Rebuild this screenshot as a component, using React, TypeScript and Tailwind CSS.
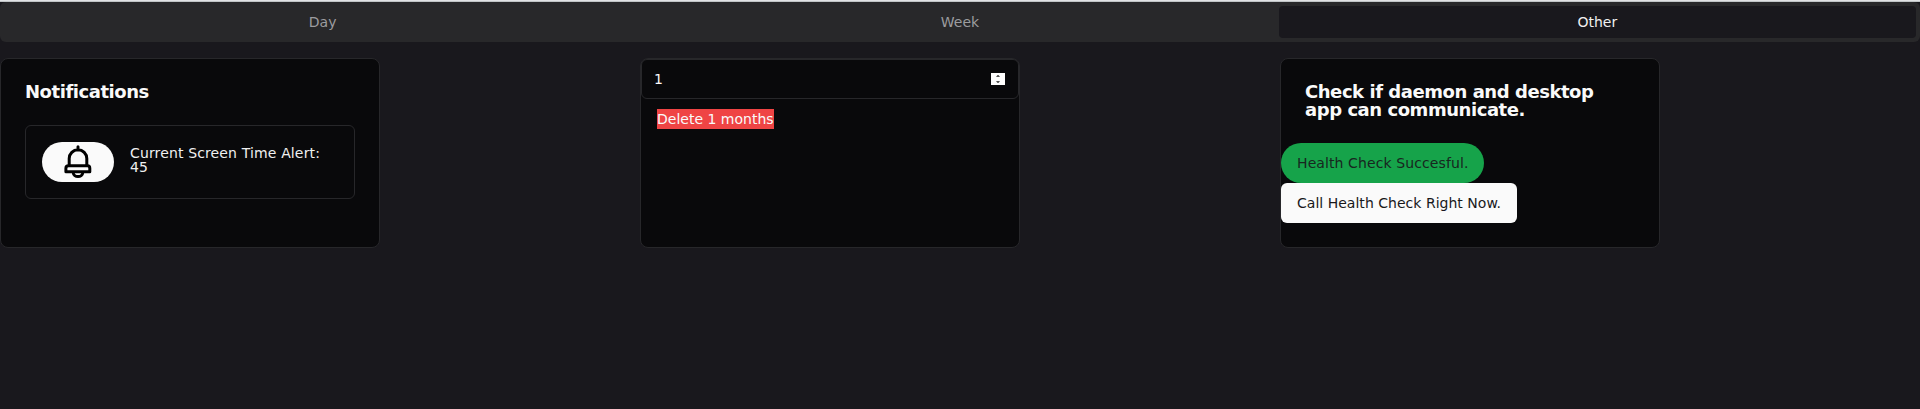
import { useState } from "react";
import type { ReactNode } from "react";

const tabs = ["Day", "Week", "Other"];

function Card({ children }: { children: ReactNode }) {
  return (
    <section className="h-[190px] w-[380px] rounded-lg border border-[#27272a] bg-[#09090b] text-[#fafafa]">
      {children}
    </section>
  );
}

function CardTitle({ children }: { children: ReactNode }) {
  return (
    <header className="p-6">
      <h3 className="text-lg leading-none font-bold tracking-tight">{children}</h3>
    </header>
  );
}

function Bell() {
  return (
    <svg width="40" height="40" viewBox="0 0 40 40" fill="none" stroke="#000" strokeWidth="3" strokeLinecap="round" strokeLinejoin="round">
      <path d="M20 4.800V8M11.200 23V16.600a8.800 8.800 0 0 1 17.600 0V23" />
      <path d="M10.500 23.800h19q2.300 0 2.300 2.500v3.500H7.900v-3.500q0-2.500 2.600-2.500z" />
      <path d="M15.200 30.500c.3 5.400 9.300 5.400 9.600 0" />
    </svg>
  );
}

export default function App() {
  const [active, setActive] = useState("Other");
  const [months, setMonths] = useState("1");

  return (
    <main className="min-h-screen border-t border-[#e1e3e5] bg-[#19181d] font-['DejaVu_Sans',sans-serif] text-sm text-[#fafafa]">
      <div className="h-px bg-[#c0c4c6]" />
      <nav className="flex h-10 rounded-md bg-[#28282a] p-1">
        {tabs.map((tab) => (
          <button
            key={tab}
            onClick={() => setActive(tab)}
            className={`flex-1 rounded-sm ${tab === active ? "bg-[#19181d] text-[#f0f0f0]" : "text-[#9c9c9f]"}`}
          >
            {tab}
          </button>
        ))}
      </nav>
      <div className="mt-4 grid grid-cols-3">
        <Card>
          <CardTitle>Notifications</CardTitle>
          <div className="mx-6 flex items-center gap-4 rounded-md border border-[#27272a] p-4">
            <div className="flex h-10 w-[72px] shrink-0 items-center justify-center rounded-full bg-[#fafafa]">
              <Bell />
            </div>
            <p className="mb-1 leading-none tracking-[0.14px] text-[#f0f0f0]">Current Screen Time Alert: 45</p>
          </div>
        </Card>
        <Card>
          <div className="flex h-10 items-center justify-between rounded-md border border-[#27272a] pr-[13px] pl-3">
            <input
              value={months}
              onChange={(event) => setMonths(event.target.value)}
              className="w-40 bg-transparent outline-none"
            />
            <svg width="14" height="12" viewBox="0 0 14 12">
              <path fill="#fff" d="M0 0h14v12H0z" />
              <path fill="#555" d="M5 4h4L7.500 2h-1zM5 8h4l-1.500 2h-1z" />
            </svg>
          </div>
          <button className="flex h-10 items-center px-4">
            <span className="bg-[#ef4444]">Delete {months} months</span>
          </button>
        </Card>
        <Card>
          <CardTitle>Check if daemon and desktop app can communicate.</CardTitle>
          <div className="flex flex-col items-start">
            <button className="h-10 rounded-full bg-[#16a34a] px-4 tracking-[0.1px] text-[#18261f]">Health Check Succesful.</button>
            <button className="h-10 rounded-md bg-[#fafafa] px-4 tracking-[0.02px] text-[#18181b]">Call Health Check Right Now.</button>
          </div>
        </Card>
      </div>
    </main>
  );
}
